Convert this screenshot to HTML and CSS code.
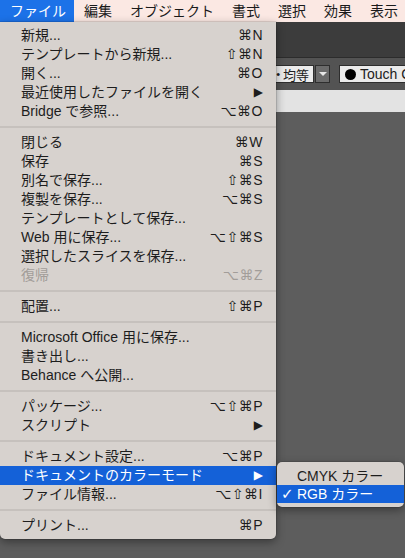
FILE: index.html
```html
<!DOCTYPE html>
<html lang="ja">
<head>
<meta charset="utf-8">
<title>ファイル メニュー</title>
<link rel="stylesheet" href="styles.css">
</head>
<body>
<div class="screen">
  <div class="menubar">
    <span class="mb-item active">ファイル</span>
    <span class="mb-item">編集</span>
    <span class="mb-item">オブジェクト</span>
    <span class="mb-item">書式</span>
    <span class="mb-item">選択</span>
    <span class="mb-item">効果</span>
    <span class="mb-item">表示</span>
  </div>
  <div class="workspace">
    <div class="appbar"></div>
    <div class="toolbar">
      <div class="field first"><span class="dot">•</span> 均等</div>
      <div class="dropbtn"><span class="tri-down"></span></div>
      <div class="field touch"><span class="bullet"></span><span class="touch-text">Touch C</span></div>
    </div>
    <div class="tabbar"></div>
    <div class="canvas"></div>
  </div>

  <div class="menu">
    <div class="group">
      <div class="item"><span>新規...</span><span class="sc">⌘N</span></div>
      <div class="item"><span>テンプレートから新規...</span><span class="sc">⇧⌘N</span></div>
      <div class="item"><span>開く...</span><span class="sc">⌘O</span></div>
      <div class="item"><span>最近使用したファイルを開く</span><span class="arrow">▶</span></div>
      <div class="item"><span>Bridge で参照...</span><span class="sc">⌥⌘O</span></div>
    </div>
    <div class="sep"></div>
    <div class="group">
      <div class="item"><span>閉じる</span><span class="sc">⌘W</span></div>
      <div class="item"><span>保存</span><span class="sc">⌘S</span></div>
      <div class="item"><span>別名で保存...</span><span class="sc">⇧⌘S</span></div>
      <div class="item"><span>複製を保存...</span><span class="sc">⌥⌘S</span></div>
      <div class="item"><span>テンプレートとして保存...</span></div>
      <div class="item"><span>Web 用に保存...</span><span class="sc">⌥⇧⌘S</span></div>
      <div class="item"><span>選択したスライスを保存...</span></div>
      <div class="item disabled"><span>復帰</span><span class="sc">⌥⌘Z</span></div>
    </div>
    <div class="sep"></div>
    <div class="group">
      <div class="item"><span>配置...</span><span class="sc">⇧⌘P</span></div>
    </div>
    <div class="sep"></div>
    <div class="group">
      <div class="item"><span>Microsoft Office 用に保存...</span></div>
      <div class="item"><span>書き出し...</span></div>
      <div class="item"><span>Behance へ公開...</span></div>
    </div>
    <div class="sep"></div>
    <div class="group">
      <div class="item"><span>パッケージ...</span><span class="sc">⌥⇧⌘P</span></div>
      <div class="item"><span>スクリプト</span><span class="arrow">▶</span></div>
    </div>
    <div class="sep"></div>
    <div class="group">
      <div class="item"><span>ドキュメント設定...</span><span class="sc">⌥⌘P</span></div>
      <div class="item selected"><span>ドキュメントのカラーモード</span><span class="arrow">▶</span></div>
      <div class="item"><span>ファイル情報...</span><span class="sc">⌥⇧⌘I</span></div>
    </div>
    <div class="sep"></div>
    <div class="group">
      <div class="item"><span>プリント...</span><span class="sc">⌘P</span></div>
    </div>
  </div>

  <div class="submenu">
    <div class="sub-item"><span class="check"></span><span>CMYK カラー</span></div>
    <div class="sub-item selected"><span class="check">✓</span><span>RGB カラー</span></div>
  </div>
</div>
</body>
</html>
```

FILE: styles.css
```css
html, body {
  margin: 0;
  padding: 0;
}

body {
  font-family: "Liberation Sans", "Noto Sans CJK JP", sans-serif;
  font-size: 14px;
  color: #1e1e1e;
  background: #5d5d5d;
}

.screen {
  position: relative;
  width: 405px;
  height: 558px;
  overflow: hidden;
  display: flex;
  flex-direction: column;
}

/* ---------- menu bar ---------- */
.menubar {
  height: 22px;
  flex: none;
  display: flex;
  align-items: stretch;
  background: #fbe8e3;
  white-space: nowrap;
}

.mb-item {
  flex: none;
  padding: 0 8px 0 10px;
  line-height: 22px;
  color: #1a1a1a;
}

.mb-item.active {
  background: #1c72e8;
  color: #ffffff;
}

/* ---------- workspace ---------- */
.workspace {
  flex: 1;
  display: flex;
  flex-direction: column;
}

.appbar {
  height: 35px;
  background: #3c3c3c;
}

.toolbar {
  height: 32px;
  background: #535353;
  border-top: 1px solid #2c2c2c;
  display: flex;
  align-items: center;
  padding-left: 240px;
  gap: 1px;
  white-space: nowrap;
  overflow: hidden;
}

.field {
  flex: none;
  height: 18px;
  background: #ebebeb;
  border: 1px solid #2e2e2e;
  display: flex;
  align-items: center;
  font-size: 13px;
  color: #202020;
  box-sizing: border-box;
}

.field.first {
  width: 74px;
  justify-content: flex-end;
  padding-right: 4px;
  gap: 3px;
}

.dot {
  font-size: 11px;
}

.dropbtn {
  flex: none;
  width: 15px;
  height: 18px;
  background: #6b6b6b;
  border: 1px solid #2e2e2e;
  box-sizing: border-box;
  display: flex;
  align-items: center;
  justify-content: center;
}

.tri-down {
  width: 0;
  height: 0;
  border-left: 4px solid transparent;
  border-right: 4px solid transparent;
  border-top: 4px solid #e8e8e8;
}

.field.touch {
  margin-left: 8px;
  width: 80px;
  padding-left: 5px;
  font-size: 14px;
  gap: 4px;
}

.bullet {
  flex: none;
  width: 11px;
  height: 11px;
  border-radius: 50%;
  background: #000;
}

.touch-text {
  flex: none;
}

.tabbar {
  height: 22px;
  background: #e3e3e3;
}

.canvas {
  flex: 1;
  background: #5d5d5d;
}

/* ---------- dropdown menu ---------- */
.menu {
  position: absolute;
  top: 22px;
  left: 0;
  width: 276px;
  padding: 4px 0;
  background: #d7d2ce;
  border-radius: 0 0 5px 5px;
  box-shadow: 0 3px 10px rgba(0, 0, 0, 0.4), 0 0 0 0.5px rgba(0, 0, 0, 0.2);
  white-space: nowrap;
}

.item {
  height: 19px;
  line-height: 19px;
  display: flex;
  justify-content: space-between;
  align-items: center;
  padding: 0 13px 0 21px;
  color: #1d1d1d;
}

.sc {
  font-family: "Liberation Sans", "DejaVu Sans", sans-serif;
  letter-spacing: 0.5px;
}

.arrow {
  font-family: "DejaVu Sans", sans-serif;
  font-size: 12px;
  color: #1d1d1d;
}

.item.disabled {
  color: #a29d99;
}

.item.selected {
  background: #1461d8;
  color: #ffffff;
}

.item.selected .arrow {
  color: #ffffff;
}

.sep {
  height: 2px;
  margin: 5px 0;
  background: #c6c1bd;
}

/* ---------- submenu ---------- */
.submenu {
  position: absolute;
  top: 462px;
  left: 277px;
  width: 127px;
  padding: 5px 0 4px;
  background: #d7d2ce;
  border-radius: 5px;
  box-shadow: 0 3px 10px rgba(0, 0, 0, 0.4), 0 0 0 0.5px rgba(0, 0, 0, 0.2);
  white-space: nowrap;
}

.sub-item {
  height: 18px;
  line-height: 18px;
  display: flex;
  align-items: center;
  color: #1d1d1d;
}

.check {
  width: 20px;
  padding-left: 4px;
  box-sizing: border-box;
  font-family: "DejaVu Sans", sans-serif;
  font-size: 15px;
  font-weight: bold;
}

.sub-item.selected {
  background: #1461d8;
  color: #ffffff;
}
```
